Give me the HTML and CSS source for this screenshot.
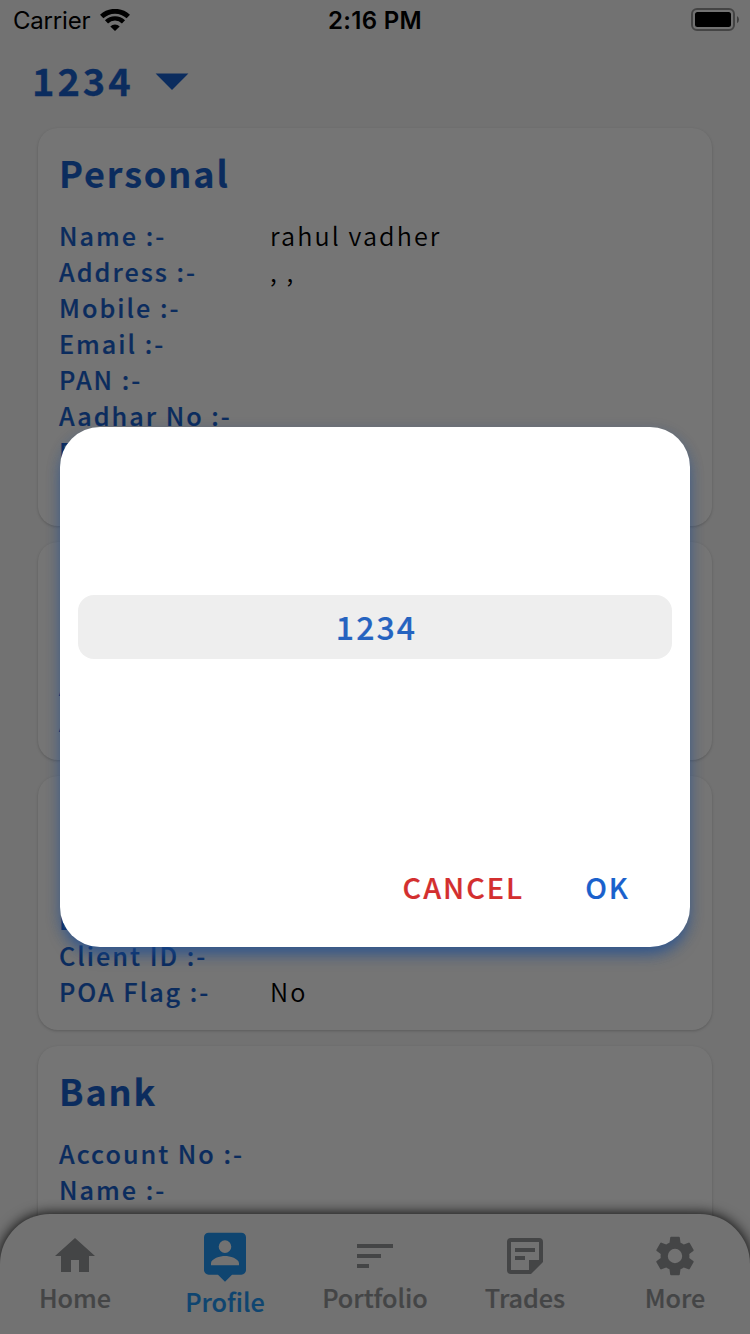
FILE: index.html
```html
<!DOCTYPE html>
<html lang="en">
<head>
<meta charset="utf-8">
<title>Profile</title>
<link rel="stylesheet" href="styles.css">
</head>
<body>
<div class="screen">
  <header class="status">
    <div class="carrier"><span>Carrier</span>
      <svg class="wifi" width="30" height="22" viewBox="0 0 30 22"><path d="M1.700 7.600a19.200 19.200 0 0 1 26.600 0" fill="none" stroke="#000" stroke-width="4.800"/><path d="M6.500 12.900a12 12 0 0 1 17 0" fill="none" stroke="#000" stroke-width="4.400"/><path d="M10.300 17.500a6.800 6.800 0 0 1 9.400 0L15 22z"/></svg>
    </div>
    <div class="clock">2:16 PM</div>
    <svg class="battery" width="49" height="24" viewBox="0 0 49 24"><rect x="1" y="1" width="42" height="21" rx="5" fill="none" stroke="#000" stroke-opacity=".4" stroke-width="2"/><rect x="4" y="4" width="36" height="15" rx="2.5"/><path d="M46 8q2 1.4 2 3.600t-2 3.600z" fill-opacity=".45"/></svg>
  </header>
  <div class="account"><span>1234</span><svg width="34" height="18" viewBox="0 0 34 18"><path d="M.6.5h32.800L17 17z" fill="currentColor"/></svg></div>
  <main class="cards">
    <section class="card">
      <h2>Personal</h2>
      <dl>
        <dt>Name :-</dt><dd>rahul vadher</dd>
        <dt>Address :-</dt><dd>, ,</dd>
        <dt>Mobile :-</dt><dd></dd>
        <dt>Email :-</dt><dd></dd>
        <dt>PAN :-</dt><dd></dd>
        <dt>Aadhar No :-</dt><dd></dd>
        <dt>DOB :-</dt><dd></dd>
        <dt></dt><dd></dd>
      </dl>
    </section>
    <section class="card">
      <h2></h2>
      <dl><dt></dt><dd></dd><dt>A</dt><dd></dd><dt>A</dt><dd></dd></dl>
    </section>
    <section class="card">
      <h2></h2>
      <dl>
        <dt></dt><dd></dd>
        <dt>DP ID :-</dt><dd></dd>
        <dt>Client ID :-</dt><dd></dd>
        <dt>POA Flag :-</dt><dd>No</dd>
      </dl>
    </section>
    <section class="card">
      <h2>Bank</h2>
      <dl><dt>Account No :-</dt><dd></dd><dt>Name :-</dt><dd></dd><dt></dt><dd></dd></dl>
    </section>
  </main>
  <nav class="tabs">
    <a class="tab"><svg width="48" height="48" viewBox="0 0 24 24"><path d="M10 20v-6h4v6h5v-8h3L12 3 2 12h3v8z"/></svg><span>Home</span></a>
    <a class="tab active"><svg width="56" height="56" viewBox="0 0 24 24"><path d="M19 2H5a2 2 0 0 0-2 2v14a2 2 0 0 0 2 2h4l3 3 3-3h4a2 2 0 0 0 2-2V4a2 2 0 0 0-2-2zm-7 3.300a2.700 2.700 0 1 1 0 5.400 2.700 2.700 0 0 1 0-5.400zM18 16H6v-.9c0-2 4-3.100 6-3.100s6 1.100 6 3.100z"/></svg><span>Profile</span></a>
    <a class="tab"><svg width="48" height="48" viewBox="0 0 24 24"><path d="M3 18h6v-2H3zM3 6v2h18V6zm0 7h12v-2H3z"/></svg><span>Portfolio</span></a>
    <a class="tab"><svg width="48" height="48" viewBox="0 0 24 24"><path d="M19 5v9h-5v5H5V5h14m0-2H5a2 2 0 0 0-2 2v14a2 2 0 0 0 2 2h10l6-6V5a2 2 0 0 0-2-2zm-7 11H7v-2h5zm5-4H7V8h10z"/></svg><span>Trades</span></a>
    <a class="tab"><svg width="48" height="48" viewBox="0 0 24 24"><path d="M19.140 12.940c.04-.3.060-.61.060-.94 0-.32-.02-.64-.07-.94l2.030-1.580a.49.49 0 0 0 .12-.61l-1.920-3.320a.488.488 0 0 0-.59-.22l-2.390.96c-.5-.38-1.030-.7-1.620-.94l-.36-2.540a.484.484 0 0 0-.48-.41h-3.840c-.24 0-.43.170-.47.410l-.36 2.540c-.59.240-1.130.570-1.620.940l-2.390-.96c-.22-.08-.47 0-.59.220L2.740 8.870c-.12.210-.08.470.12.610l2.030 1.580c-.05.3-.09.630-.09.940s.02.640.070.940l-2.030 1.580a.49.49 0 0 0-.12.610l1.920 3.320c.12.220.370.290.590.220l2.390-.96c.5.380 1.030.7 1.620.940l.36 2.540c.05.240.240.410.480.410h3.840c.24 0 .44-.17.470-.41l.36-2.540c.59-.24 1.130-.56 1.620-.94l2.390.960c.22.080.470 0 .590-.22l1.920-3.320c.12-.22.070-.47-.12-.61zM12 15.600a3.600 3.600 0 1 1 0-7.200 3.600 3.600 0 0 1 0 7.200z"/></svg><span>More</span></a>
  </nav>
  <div class="overlay">
    <div class="dialog">
      <div class="picker"><div class="option">1234</div></div>
      <div class="actions"><span class="cancel">CANCEL</span><span class="ok">OK</span></div>
    </div>
  </div>
</div>
</body>
</html>
```
FILE: styles.css
```css
* { box-sizing: border-box; }
body { margin: 0; }
.screen {
  position: relative;
  width: 750px;
  height: 1334px;
  overflow: hidden;
  display: flex;
  flex-direction: column;
  background: #f8f8f8;
  color: #000;
  font-family: "Noto Sans CJK SC", "Noto Sans", sans-serif;
}
.status {
  height: 40px;
  flex: none;
  display: grid;
  grid-template-columns: 1fr auto 1fr;
  align-items: center;
  padding: 0 10px 0 13px;
  font: 400 24px/38px Inter, sans-serif;
}
.carrier { display: flex; align-items: center; gap: 10px; letter-spacing: -0.2px; }
.carrier span, .clock { padding-top: 2px; }
.clock { font-weight: 600; letter-spacing: 0.3px; margin-left: -3px; }
.battery { justify-self: end; }
.account {
  height: 88px;
  flex: none;
  display: flex;
  align-items: center;
  gap: 21px;
  padding: 0 0 6px 32px;
  color: #1a61cc;
  font-size: 38px;
  font-weight: 700;
  line-height: 54px;
  letter-spacing: 3px;
}
.account span { padding-bottom: 2px; -webkit-text-stroke: 0.3px currentColor; }
.account svg { margin-top: 1px; }
.cards {
  flex: none;
  display: flex;
  flex-direction: column;
  gap: 16px;
  padding: 0 38px;
}
.card {
  padding: 0 21px 19px;
  border-radius: 20px;
  background: #fff;
  box-shadow: 0 1px 3px rgba(0, 0, 0, 0.2);
}
.card h2 {
  height: 89px;
  margin: 0;
  color: #1a61cc;
  font-size: 36px;
  font-weight: 700;
  line-height: 88px;
  letter-spacing: 1.9px;
  -webkit-text-stroke: 0.2px currentColor;
}
.card dl {
  margin: 0;
  padding-bottom: 2px;
  display: grid;
  grid-template-columns: 211px 1fr;
  grid-auto-rows: 36px;
  font-size: 25.2px;
  line-height: 36px;
  letter-spacing: 2px;
  white-space: nowrap;
}
.card dt { color: #1a61cc; font-weight: 500; -webkit-text-stroke: 0.2px currentColor; }
.card dd { margin: 0; font-weight: 350; letter-spacing: 2.1px; }
.tabs {
  position: absolute;
  left: 0;
  right: 0;
  bottom: 0;
  height: 120px;
  display: flex;
  border-radius: 50px 50px 0 0;
  background: #f8f8f8;
  box-shadow: 0 0 14px #000;
}
.tab {
  flex: 1;
  display: flex;
  flex-direction: column;
  align-items: center;
  padding-top: 18px;
  color: #949698;
  font-size: 25.2px;
  font-weight: 500;
  line-height: 34px;
  -webkit-text-stroke: 0.2px currentColor;
}
.tab svg { fill: currentColor; }
.tab.active { padding-top: 14px; color: #2196f3; }
.tab.active svg { margin-bottom: 0; }
.overlay {
  position: absolute;
  inset: 0;
  display: flex;
  justify-content: center;
  align-items: flex-start;
  padding-top: 427px;
  background: rgba(0, 0, 0, 0.54);
}
.dialog {
  width: 630px;
  height: 520px;
  display: flex;
  flex-direction: column;
  padding: 0 18px;
  border-radius: 40px;
  background: #fff;
  box-shadow: 0 10px 16px -4px rgba(26, 75, 150, 0.7), 0 4px 14px rgba(26, 75, 150, 0.3);
}
.picker { height: 400px; display: flex; align-items: center; }
.option {
  flex: 1;
  height: 64px;
  border-radius: 16px;
  background: #eee;
  color: #2563c0;
  font-size: 32px;
  font-weight: 500;
  line-height: 62px;
  letter-spacing: 2.1px;
  text-indent: 3px;
  text-align: center;
  -webkit-text-stroke: 0.2px currentColor;
}
.actions {
  display: flex;
  justify-content: flex-end;
  gap: 61px;
  padding: 37px 42px 0 0;
  font-size: 28.8px;
  font-weight: 500;
  line-height: 46px;
  letter-spacing: 2px;
  -webkit-text-stroke: 0.2px currentColor;
}
.cancel { color: #d32f2f; }
.ok { color: #1a61cc; }
```
